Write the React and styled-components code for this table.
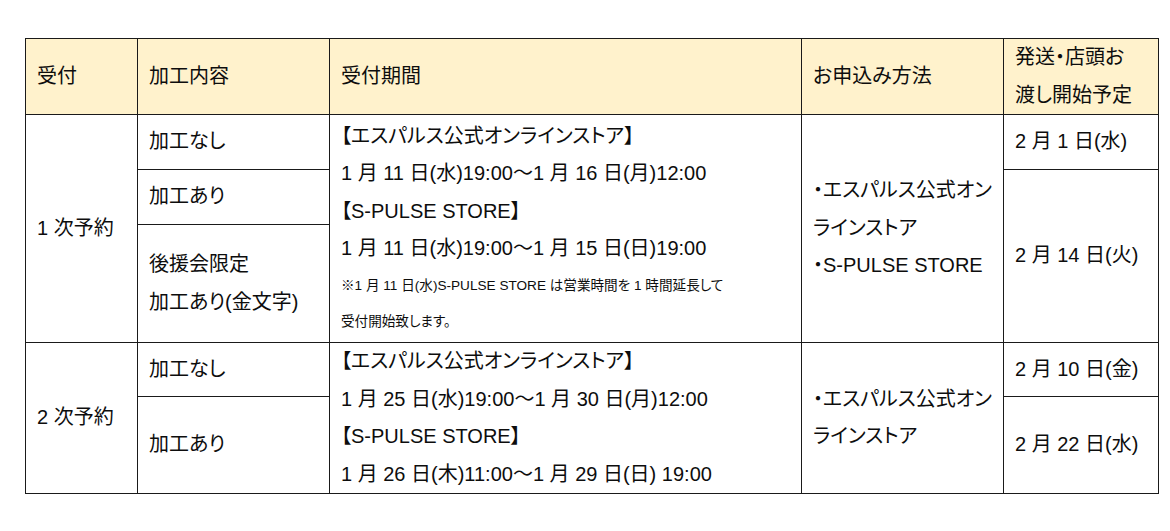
import React from "react";
import styled, { createGlobalStyle } from "styled-components";

const GlobalStyle = createGlobalStyle`
  html, body {
    margin: 0;
    padding: 0;
    background: #ffffff;
  }
  body {
    font-family: "Liberation Sans", "Noto Sans CJK JP", sans-serif;
    color: #0d0d0d;
  }
`;

const Page = styled.div`
  padding: 38px 0 0 25px;
`;

const Table = styled.table`
  border-collapse: collapse;
  table-layout: fixed;
  width: 1133px;
  font-size: 20px;
  line-height: 37.5px;
  font-feature-settings: "palt";
`;

const Row = styled.tr`
  height: ${(p) => p.$h}px;
`;

const HeadCell = styled.th`
  background: #fff2cc;
  border: 1px solid #1a1a1a;
  font-weight: normal;
  text-align: left;
  vertical-align: middle;
  padding: 0 6px 0 11px;
  white-space: nowrap;
`;

const Cell = styled.td`
  border: 1px solid #1a1a1a;
  text-align: left;
  vertical-align: middle;
  padding: 0 6px 0 11px;
  white-space: nowrap;
`;

const Line = styled.div`
  line-height: 37.5px;
`;

const Note = styled.div`
  font-size: 13.6px;
  line-height: 36px;
`;

const periods1 = [
  "【エスパルス公式オンラインストア】",
  "1 月 11 日(水)19:00～1 月 16 日(月)12:00",
  "【S-PULSE STORE】",
  "1 月 11 日(水)19:00～1 月 15 日(日)19:00",
];

const periods2 = [
  "【エスパルス公式オンラインストア】",
  "1 月 25 日(水)19:00～1 月 30 日(月)12:00",
  "【S-PULSE STORE】",
  "1 月 26 日(木)11:00～1 月 29 日(日) 19:00",
];

export default function App() {
  return (
    <>
      <GlobalStyle />
      <Page>
        <Table>
          <colgroup>
            <col style={{ width: 112 }} />
            <col style={{ width: 192 }} />
            <col style={{ width: 472 }} />
            <col style={{ width: 202 }} />
            <col style={{ width: 155 }} />
          </colgroup>
          <thead>
            <Row $h={76}>
              <HeadCell>受付</HeadCell>
              <HeadCell>加工内容</HeadCell>
              <HeadCell>受付期間</HeadCell>
              <HeadCell>お申込み方法</HeadCell>
              <HeadCell>
                <Line>発送・店頭お</Line>
                <Line>渡し開始予定</Line>
              </HeadCell>
            </Row>
          </thead>
          <tbody>
            <Row $h={55}>
              <Cell rowSpan={3}>1 次予約</Cell>
              <Cell>加工なし</Cell>
              <Cell rowSpan={3}>
                {periods1.map((t) => (
                  <Line key={t}>{t}</Line>
                ))}
                <Note>※1 月 11 日(水)S-PULSE STORE は営業時間を 1 時間延長して</Note>
                <Note>受付開始致します。</Note>
              </Cell>
              <Cell rowSpan={3}>
                <Line>・エスパルス公式オン</Line>
                <Line>ラインストア</Line>
                <Line>・S-PULSE STORE</Line>
              </Cell>
              <Cell>2 月 1 日(水)</Cell>
            </Row>
            <Row $h={55}>
              <Cell>加工あり</Cell>
              <Cell rowSpan={2}>2 月 14 日(火)</Cell>
            </Row>
            <Row $h={118}>
              <Cell>
                <Line>後援会限定</Line>
                <Line>加工あり(金文字)</Line>
              </Cell>
            </Row>
            <Row $h={54}>
              <Cell rowSpan={2}>2 次予約</Cell>
              <Cell>加工なし</Cell>
              <Cell rowSpan={2}>
                {periods2.map((t) => (
                  <Line key={t}>{t}</Line>
                ))}
              </Cell>
              <Cell rowSpan={2}>
                <Line>・エスパルス公式オン</Line>
                <Line>ラインストア</Line>
              </Cell>
              <Cell>2 月 10 日(金)</Cell>
            </Row>
            <Row $h={97}>
              <Cell>加工あり</Cell>
              <Cell>2 月 22 日(水)</Cell>
            </Row>
          </tbody>
        </Table>
      </Page>
    </>
  );
}
